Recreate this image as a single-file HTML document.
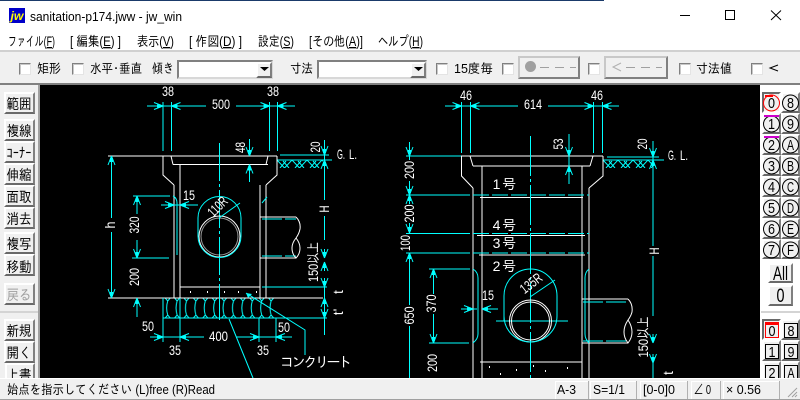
<!DOCTYPE html>
<html lang="ja"><head><meta charset="utf-8"><title>sanitation-p174.jww - jw_win</title>
<style>
html,body{margin:0;padding:0;width:800px;height:400px;overflow:hidden;background:#f0f0f0}
div{position:absolute;box-sizing:border-box}
.b{background:#f0f0f0;border:2px solid;border-color:#fff #808080 #696969 #fff}
.cb{background:#fff;border:1px solid;border-color:#808080 #e4e4e4 #e4e4e4 #808080;width:12px;height:12px;top:63px;box-shadow:inset 1px 1px 0 #c8c8c8}
.sel{background:#fff;border:2px solid;border-color:#808080 #d8d8d8 #d8d8d8 #808080;top:60px;height:19px}
.st{top:381px;height:18px;background:#f0f0f0;border:1px solid;border-color:#fff #b0b0b0 #f0f0f0 #fff}
svg{position:absolute;left:0;top:0}
svg text{font-family:"Liberation Sans","IPAGothic",sans-serif}
.d text{fill:#fff;font-size:14px;text-anchor:middle}
.j{font-family:"IPAGothic","Liberation Sans",sans-serif !important}
.c{stroke:#0ff;fill:none;stroke-width:1.2}
.w{stroke:#fff;fill:none;stroke-width:1.2}
.t{stroke:#0ff;fill:none;stroke-width:1}
.v{stroke:#fff;fill:none;stroke-width:1}
</style></head><body>
<div style="left:0;top:0;width:800px;height:50px;background:#fff"></div>
<div style="left:0;top:0;width:604px;height:1px;background:#1a3a6a"></div>
<div style="left:0;top:50px;width:800px;height:2px;background:#d0d0d0"></div>
<div style="left:0;top:83px;width:800px;height:2px;background:#808080"></div>
<div style="left:38px;top:85px;width:2px;height:293px;background:#a0a0a0"></div>
<div style="left:40px;top:85px;width:720px;height:293px;background:#000"></div>
<div style="left:760px;top:85px;width:40px;height:293px;background:#fff"></div>

<div class="cb" style="left:19px"></div><div class="cb" style="left:72px"></div>
<div class="sel" style="left:177px;width:96px"></div><div class="b" style="left:256px;top:62px;width:16px;height:16px"></div>
<div class="sel" style="left:317px;width:110px"></div><div class="b" style="left:410px;top:62px;width:16px;height:16px"></div>
<div class="cb" style="left:436px"></div><div class="cb" style="left:502px"></div>
<div class="b" style="left:518px;top:56px;width:62px;height:23px;border-color:#c8c8c8 #808080 #808080 #c8c8c8"></div>
<div class="cb" style="left:588px"></div>
<div class="b" style="left:604px;top:56px;width:64px;height:23px;border-color:#c8c8c8 #808080 #808080 #c8c8c8"></div>
<div class="cb" style="left:679px"></div><div class="cb" style="left:751px"></div>

<div class="b" style="left:4px;top:92px;width:31px;height:22px"></div>
<div class="b" style="left:4px;top:119px;width:31px;height:22px"></div>
<div class="b" style="left:4px;top:141px;width:31px;height:22px"></div>
<div class="b" style="left:4px;top:163px;width:31px;height:22px"></div>
<div class="b" style="left:4px;top:185px;width:31px;height:22px"></div>
<div class="b" style="left:4px;top:207px;width:31px;height:22px"></div>
<div class="b" style="left:4px;top:232px;width:31px;height:22px"></div>
<div class="b" style="left:4px;top:254px;width:31px;height:22px"></div>
<div class="b" style="left:4px;top:283px;width:31px;height:22px"></div>
<div style="left:0;top:311px;width:38px;height:2px;background:#d4d4d4"></div>
<div class="b" style="left:4px;top:319px;width:31px;height:22px"></div>
<div class="b" style="left:4px;top:341px;width:31px;height:22px"></div>
<div class="b" style="left:5px;top:363px;width:30px;height:22px"></div>

<div class="b" style="left:762px;top:92px;width:19px;height:21px;border-color:#696969 #fff #fff #696969"></div>
<div class="b" style="left:781px;top:92px;width:19px;height:21px"></div>
<div class="b" style="left:762px;top:113px;width:19px;height:21px"></div><div class="b" style="left:781px;top:113px;width:19px;height:21px"></div>
<div class="b" style="left:762px;top:134px;width:19px;height:21px"></div><div class="b" style="left:781px;top:134px;width:19px;height:21px"></div>
<div class="b" style="left:762px;top:155px;width:19px;height:21px"></div><div class="b" style="left:781px;top:155px;width:19px;height:21px"></div>
<div class="b" style="left:762px;top:176px;width:19px;height:21px"></div><div class="b" style="left:781px;top:176px;width:19px;height:21px"></div>
<div class="b" style="left:762px;top:197px;width:19px;height:21px"></div><div class="b" style="left:781px;top:197px;width:19px;height:21px"></div>
<div class="b" style="left:762px;top:218px;width:19px;height:21px"></div><div class="b" style="left:781px;top:218px;width:19px;height:21px"></div>
<div class="b" style="left:762px;top:239px;width:19px;height:20px"></div><div class="b" style="left:781px;top:239px;width:19px;height:20px"></div>
<div class="b" style="left:768px;top:263px;width:25px;height:20px"></div>
<div class="b" style="left:768px;top:285px;width:25px;height:21px"></div>
<div style="left:761px;top:311px;width:39px;height:2px;background:#d4d4d4"></div>
<div class="b" style="left:762px;top:319px;width:19px;height:21px;border-color:#696969 #fff #fff #696969"></div><div class="b" style="left:781px;top:319px;width:19px;height:21px"></div>
<div class="b" style="left:762px;top:340px;width:19px;height:21px"></div><div class="b" style="left:781px;top:340px;width:19px;height:21px"></div>
<div class="b" style="left:762px;top:361px;width:19px;height:21px"></div><div class="b" style="left:781px;top:361px;width:19px;height:21px"></div>

<div style="left:0;top:378px;width:800px;height:22px;background:#f0f0f0;border-top:1px solid #fff;border-bottom:1px solid #a0a0a0"></div>

<svg width="800" height="400" viewBox="0 0 800 400" style="z-index:1">
<defs>
<g id="ar"><path d="M0 0L-3.5 -9M0 0L3.5 -9M0 0V-9" stroke="#0ff" stroke-width="1" fill="none"/><rect x="-1.5" y="-6" width="3" height="4" fill="#0ff"/></g>
<pattern id="gr" x="163" y="298" width="9.4" height="20" patternUnits="userSpaceOnUse"><path d="M4.7 3Q2.6 10 4.7 17M2.2 0L4.7 3L7.2 0M2.2 20L4.7 17L7.2 20" stroke="#0ff" stroke-width="1" fill="none"/></pattern>
<pattern id="ha" x="277" y="160" width="15" height="8" patternUnits="userSpaceOnUse"><path d="M0 0L7.5 8L15 0M3 8L9 1M6 1L12 8" stroke="#0ff" stroke-width="1" fill="none"/></pattern>
<pattern id="hb" x="603" y="160" width="15" height="8" patternUnits="userSpaceOnUse"><path d="M0 0L7.5 8L15 0M3 8L9 1M6 1L12 8" stroke="#0ff" stroke-width="1" fill="none"/></pattern>
</defs>

<!-- title bar -->
<rect x="9" y="8" width="16" height="15" fill="#0000c8"/>
<text x="10.5" y="20" font-size="12" font-weight="bold" font-style="italic" fill="#ff0" textLength="13" lengthAdjust="spacingAndGlyphs">jw</text>
<text x="30" y="21" font-size="12.5" fill="#000" textLength="152" lengthAdjust="spacingAndGlyphs">sanitation-p174.jww - jw_win</text>
<path d="M680 15.5H690" stroke="#000" fill="none"/>
<rect x="725.5" y="10.5" width="9" height="9" stroke="#000" fill="none"/>
<path d="M771 10.5L781 20M781 10.5L771 20" stroke="#000" fill="none"/>

<!-- menu -->
<g font-size="13.5" fill="#000">
<text x="8" y="46" textLength="47" lengthAdjust="spacingAndGlyphs">ファイル(<tspan text-decoration="underline">F</tspan>)</text>
<text x="70" y="46" textLength="51" lengthAdjust="spacingAndGlyphs">[ 編集(<tspan text-decoration="underline">E</tspan>) ]</text>
<text x="137" y="46" textLength="37" lengthAdjust="spacingAndGlyphs">表示(<tspan text-decoration="underline">V</tspan>)</text>
<text x="189" y="46" textLength="53" lengthAdjust="spacingAndGlyphs">[ 作図(<tspan text-decoration="underline">D</tspan>) ]</text>
<text x="258" y="46" textLength="36" lengthAdjust="spacingAndGlyphs">設定(<tspan text-decoration="underline">S</tspan>)</text>
<text x="309" y="46" textLength="54" lengthAdjust="spacingAndGlyphs">[その他(<tspan text-decoration="underline">A</tspan>)]</text>
<text x="378" y="46" textLength="45" lengthAdjust="spacingAndGlyphs">ヘルプ(<tspan text-decoration="underline">H</tspan>)</text>
</g>

<!-- toolbar -->
<g font-size="13" fill="#000">
<text x="37" y="73" textLength="24" lengthAdjust="spacingAndGlyphs">矩形</text>
<text x="90" y="73" textLength="52" lengthAdjust="spacingAndGlyphs">水平･垂直</text>
<text x="152" y="73" textLength="22" lengthAdjust="spacingAndGlyphs">傾き</text>
<text x="290" y="73" textLength="23" lengthAdjust="spacingAndGlyphs">寸法</text>
<text x="454" y="73" textLength="39" lengthAdjust="spacingAndGlyphs">15度毎</text>
<text x="696" y="73" textLength="36" lengthAdjust="spacingAndGlyphs">寸法値</text>
<path d="M778 65L770 68L778 71" stroke="#000" fill="none"/>
</g>
<path d="M260 67H269L264.5 71Z M414 67H423L418.5 71Z" fill="#000"/>
<circle cx="530.5" cy="66.5" r="5.5" fill="#a0a0a0"/>
<path d="M540 67.5H549M555 67.5H564M570 67.5H576M626 67.5H635M641 67.5H650M656 67.5H662" stroke="#a0a0a0" fill="none"/>
<path d="M621 63L613 67L621 71" stroke="#b0b0b0" fill="none"/>

<!-- left buttons -->
<g font-size="14.5" fill="#000" text-anchor="middle">
<text class="j" x="19" y="109" textLength="25" lengthAdjust="spacingAndGlyphs">範囲</text>
<text class="j" x="19" y="136" textLength="25" lengthAdjust="spacingAndGlyphs">複線</text>
<text class="j" x="19" y="158" textLength="25" lengthAdjust="spacingAndGlyphs">ｺｰﾅｰ</text>
<text class="j" x="19" y="180" textLength="25" lengthAdjust="spacingAndGlyphs">伸縮</text>
<text class="j" x="19" y="202" textLength="25" lengthAdjust="spacingAndGlyphs">面取</text>
<text class="j" x="19" y="224" textLength="25" lengthAdjust="spacingAndGlyphs">消去</text>
<text class="j" x="19" y="249" textLength="25" lengthAdjust="spacingAndGlyphs">複写</text>
<text class="j" x="19" y="272" textLength="25" lengthAdjust="spacingAndGlyphs">移動</text>
<text class="j" x="19" y="300" textLength="25" lengthAdjust="spacingAndGlyphs" fill="#a0a0a0">戻る</text>
<text class="j" x="19" y="336" textLength="25" lengthAdjust="spacingAndGlyphs">新規</text>
<text class="j" x="19" y="358" textLength="25" lengthAdjust="spacingAndGlyphs">開く</text>
<text class="j" x="19" y="380" textLength="25" lengthAdjust="spacingAndGlyphs">上書</text>
</g>

<!-- right layer buttons -->
<g fill="none" stroke="#000">
<circle cx="771.5" cy="103" r="8" stroke="#f00"/><circle cx="790.5" cy="103" r="8"/>
<circle cx="771.5" cy="124" r="8"/><circle cx="790.5" cy="124" r="8"/>
<circle cx="771.5" cy="145" r="8"/><circle cx="790.5" cy="145" r="8"/>
<circle cx="771.5" cy="166" r="8"/><circle cx="790.5" cy="166" r="8"/>
<circle cx="771.5" cy="187" r="8"/><circle cx="790.5" cy="187" r="8"/>
<circle cx="771.5" cy="208" r="8"/><circle cx="790.5" cy="208" r="8"/>
<circle cx="771.5" cy="229" r="8"/><circle cx="790.5" cy="229" r="8"/>
<circle cx="771.5" cy="250" r="8"/><circle cx="790.5" cy="250" r="8"/>
<rect x="765.5" y="323.5" width="13" height="14" stroke="#f00"/>
<rect x="784.5" y="323.5" width="13" height="14"/>
<rect x="765.5" y="344.5" width="13" height="14"/>
<rect x="784.5" y="344.5" width="13" height="14"/>
<rect x="765.5" y="365.5" width="13" height="14"/>
<rect x="784.5" y="365.5" width="13" height="14"/>
</g>
<rect x="765" y="95" width="8" height="2" fill="#f00"/>
<rect x="764" y="115" width="15" height="2" fill="#c0c"/>
<rect x="764" y="136" width="15" height="2" fill="#c0c"/>
<rect x="765" y="322" width="14" height="3" fill="#f00"/>
<g font-size="15" fill="#000" text-anchor="middle">
<text x="771.5" y="108" textLength="7" lengthAdjust="spacingAndGlyphs">0</text><text x="790.5" y="108" textLength="7" lengthAdjust="spacingAndGlyphs">8</text>
<text x="771.5" y="129" textLength="7" lengthAdjust="spacingAndGlyphs">1</text><text x="790.5" y="129" textLength="7" lengthAdjust="spacingAndGlyphs">9</text>
<text x="771.5" y="150" textLength="7" lengthAdjust="spacingAndGlyphs">2</text><text x="790.5" y="150" textLength="7" lengthAdjust="spacingAndGlyphs">A</text>
<text x="771.5" y="171" textLength="7" lengthAdjust="spacingAndGlyphs">3</text><text x="790.5" y="171" textLength="7" lengthAdjust="spacingAndGlyphs">B</text>
<text x="771.5" y="192" textLength="7" lengthAdjust="spacingAndGlyphs">4</text><text x="790.5" y="192" textLength="7" lengthAdjust="spacingAndGlyphs">C</text>
<text x="771.5" y="213" textLength="7" lengthAdjust="spacingAndGlyphs">5</text><text x="790.5" y="213" textLength="7" lengthAdjust="spacingAndGlyphs">D</text>
<text x="771.5" y="234" textLength="7" lengthAdjust="spacingAndGlyphs">6</text><text x="790.5" y="234" textLength="7" lengthAdjust="spacingAndGlyphs">E</text>
<text x="771.5" y="255" textLength="7" lengthAdjust="spacingAndGlyphs">7</text><text x="790.5" y="255" textLength="7" lengthAdjust="spacingAndGlyphs">F</text>
<text x="780.5" y="280" font-size="19" textLength="15" lengthAdjust="spacingAndGlyphs">All</text>
<text x="780.5" y="302" font-size="19" textLength="8" lengthAdjust="spacingAndGlyphs">0</text>
<text x="772" y="336" textLength="7" lengthAdjust="spacingAndGlyphs">0</text><text x="791" y="336" textLength="7" lengthAdjust="spacingAndGlyphs">8</text>
<text x="772" y="357" textLength="7" lengthAdjust="spacingAndGlyphs">1</text><text x="791" y="357" textLength="7" lengthAdjust="spacingAndGlyphs">9</text>
<text x="772" y="378" textLength="7" lengthAdjust="spacingAndGlyphs">2</text><text x="791" y="378" textLength="7" lengthAdjust="spacingAndGlyphs">A</text>
</g>

<!-- drawing -->
<g shape-rendering="crispEdges">
<rect x="163" y="298" width="113" height="20" fill="url(#gr)"/>
<rect x="277" y="160" width="46" height="8" fill="url(#ha)"/>
<path class="w" d="M108 156H277M173 164.5H268M108 298H323M180 287H260M260 217H296M260 258H296M180 164V298M174 185V298M260 185V298M266 185V298"/>
<path class="c" d="M262 287H327M163 318H327M277 160H332M280 155H329M163 298V342M180 298V342M259 318V342M276 318V342"/>
<path class="c" d="M163 102V151M171.5 102V151M269.5 102V151M277.5 102V151M147 106H206M236 106H295"/>
<path class="c" d="M111.5 156V218M111.5 232V298M133 196H170M137 196V214M137 240V258M132 258H169M137 298V317M324.5 140V200M324.5 216V240M324.5 282V335"/>
<path class="c" d="M249.5 139V153M249.5 167V182M161 205H198M150 337H204M236 337H292M177 203V255"/>
<path class="c" d="M219.5 143V320" stroke-dasharray="38 3 3 3"/>
<path class="c" d="M262 219H296M262 256H296" stroke-dasharray="20 3"/>
<rect x="603" y="160" width="50" height="8" fill="url(#hb)"/>
<path class="w" d="M461 156H603M473 166H590M480 197.5H583M477 235.5H585M479 255H585M480 362H582M473 188V378M482 166V378M582 166V378M589 188V378M582 299H628M582 343H628"/>
<path class="c" d="M406 195H470M406 233.5H470M406 253H470M406 156H461M461.5 102V153M470.5 102V153M593.5 102V153M602.5 102V153M445 106H518M548 106H619M409.5 142V160M409.5 181V204M409.5 223V233M409.5 253V305M409.5 326V378"/>
<path class="c" d="M473 195H589M473 233.5H589M473 253H589" stroke-dasharray="16 3"/>
<path class="c" d="M530.5 136V378" stroke-dasharray="40 3 3 3"/>
<path class="c" d="M429 269H470M429 343H469M433.5 269V294M433.5 314V343M461 309H477M483 309H498M569 134V184M607 157H659M603 160H664M653 141V246M653 256V316M653 358V378M496 321H568"/>
<path class="c" d="M583 302H626M583 341H626" stroke-dasharray="20 3"/>
</g>

<!-- curves -->
<path class="v" d="M171 156L173 164.5M163 156V175L174 185M277 156V175L266 185M268 156L266 164.5"/>
<path class="v" d="M296 217Q301 222 300 229Q299 234 296 238Q292 243 292 248Q292 254 296 258Q300 254 300 248Q300 243 296 238"/>
<circle class="v" cx="219.5" cy="236.5" r="20.5"/>
<circle class="v" cx="219.5" cy="236.5" r="18.5" opacity=".6"/>
<path class="t" d="M198 236V218A21.5 21.5 0 0 1 241 218V236A21.5 21.5 0 0 1 198 236Z"/>
<path class="t" d="M219 218L240 203M177 203Q177 198 173 196M262 203L267 197"/>
<path class="t" d="M229 319L253 378M246 293L305 330V355"/>
<path class="v" d="M461.5 156V176L473 188M603 156V176L589 188M470 156L473 166M593 156L590 166M628 299Q633 304 632 312Q631 316 628 320Q624 326 624 332Q624 338 628 343Q632 338 632 332Q632 326 628 320"/>
<circle class="v" cx="530.5" cy="321" r="21"/>
<circle class="v" cx="530.5" cy="321" r="19"/>
<path class="t" d="M504 321V296A26.5 27 0 0 1 557 296V316A26.5 26 0 0 1 504 316Z"/>
<path class="t" d="M530 297L555 280M473 269Q478 272 478 278V334Q478 339 473 343M589 269Q585 272 585 278V334Q585 339 589 343"/>

<!-- arrows -->
<use href="#ar" transform="translate(163,106) rotate(-90)"/>
<use href="#ar" transform="translate(171.5,106) rotate(90)"/>
<use href="#ar" transform="translate(269.5,106) rotate(-90)"/>
<use href="#ar" transform="translate(277.5,106) rotate(90)"/>
<use href="#ar" transform="translate(111.5,156) rotate(180)"/>
<use href="#ar" transform="translate(111.5,298)"/>
<use href="#ar" transform="translate(137,196) rotate(180)"/>
<use href="#ar" transform="translate(137,258)"/>
<use href="#ar" transform="translate(137,298) rotate(180)"/>
<use href="#ar" transform="translate(174,205) rotate(-90)"/>
<use href="#ar" transform="translate(180,205) rotate(90)"/>
<use href="#ar" transform="translate(163,337) rotate(-90)"/>
<use href="#ar" transform="translate(180,337) rotate(90)"/>
<use href="#ar" transform="translate(259,337) rotate(-90)"/>
<use href="#ar" transform="translate(276,337) rotate(90)"/>
<use href="#ar" transform="translate(249.5,156)"/>
<use href="#ar" transform="translate(249.5,164.5) rotate(180)"/>
<use href="#ar" transform="translate(324.5,155)"/>
<use href="#ar" transform="translate(324.5,160) rotate(180)"/>
<use href="#ar" transform="translate(324.5,258)"/>
<use href="#ar" transform="translate(324.5,262) rotate(180)"/>
<use href="#ar" transform="translate(324.5,287)"/>
<use href="#ar" transform="translate(324.5,298) rotate(180)"/>
<use href="#ar" transform="translate(324.5,318)"/>
<use href="#ar" transform="translate(461.5,106) rotate(-90)"/>
<use href="#ar" transform="translate(470.5,106) rotate(90)"/>
<use href="#ar" transform="translate(593.5,106) rotate(-90)"/>
<use href="#ar" transform="translate(602.5,106) rotate(90)"/>
<use href="#ar" transform="translate(409.5,156)"/>
<use href="#ar" transform="translate(409.5,195)"/>
<use href="#ar" transform="translate(409.5,195) rotate(180)"/>
<use href="#ar" transform="translate(409.5,233)"/>
<use href="#ar" transform="translate(409.5,253) rotate(180)"/>
<use href="#ar" transform="translate(433.5,269) rotate(180)"/>
<use href="#ar" transform="translate(433.5,343)"/>
<use href="#ar" transform="translate(473,309) rotate(-90)"/>
<use href="#ar" transform="translate(482,309) rotate(90)"/>
<use href="#ar" transform="translate(569,156)"/>
<use href="#ar" transform="translate(569,166) rotate(180)"/>
<use href="#ar" transform="translate(653,157)"/>
<use href="#ar" transform="translate(653,160) rotate(180)"/>
<use href="#ar" transform="translate(653,343)"/>
<use href="#ar" transform="translate(653,363)"/>

<!-- dots -->
<path d="M190 291h1v2h-1zM207 291h1v2h-1zM224 291h1v2h-1zM238 291h1v2h-1zM256 291h1v2h-1zM489 366h1v2h-1zM500 373h1v2h-1zM516 369h1v2h-1zM533 365h1v2h-1zM545 370h1v2h-1zM567 367h1v2h-1z" fill="#fff"/>
<path d="M246 293L252 294L248 298Z" fill="#0ff"/>

<!-- drawing text -->
<g class="d">
<text x="168" y="96" textLength="12" lengthAdjust="spacingAndGlyphs">38</text>
<text x="273" y="96" textLength="12" lengthAdjust="spacingAndGlyphs">38</text>
<text x="221" y="109" textLength="18" lengthAdjust="spacingAndGlyphs">500</text>
<text x="533" y="109" textLength="18" lengthAdjust="spacingAndGlyphs">614</text>
<text x="466" y="100" textLength="12" lengthAdjust="spacingAndGlyphs">46</text>
<text x="597" y="100" textLength="12" lengthAdjust="spacingAndGlyphs">46</text>
<text x="189" y="200" textLength="12" lengthAdjust="spacingAndGlyphs">15</text>
<text x="488" y="300" textLength="12" lengthAdjust="spacingAndGlyphs">15</text>
<text x="341" y="159" textLength="8" lengthAdjust="spacingAndGlyphs">G.</text>
<text x="353" y="159" textLength="8" lengthAdjust="spacingAndGlyphs">L.</text>
<text x="672" y="160" textLength="8" lengthAdjust="spacingAndGlyphs">G.</text>
<text x="684" y="160" textLength="8" lengthAdjust="spacingAndGlyphs">L.</text>
<text x="148" y="331" textLength="12" lengthAdjust="spacingAndGlyphs">50</text>
<text x="175" y="355" textLength="12" lengthAdjust="spacingAndGlyphs">35</text>
<text x="218.5" y="341" textLength="19" lengthAdjust="spacingAndGlyphs">400</text>
<text x="263" y="355" textLength="12" lengthAdjust="spacingAndGlyphs">35</text>
<text x="284" y="332" textLength="12" lengthAdjust="spacingAndGlyphs">50</text>
<text x="316" y="367" font-size="12" textLength="72" lengthAdjust="spacing">コンクリート</text>
<text x="496.5" y="189" font-size="12">1</text><text x="509" y="189" font-size="12">号</text>
<text x="496.5" y="230" font-size="12">4</text><text x="509" y="230" font-size="12">号</text>
<text x="496.5" y="248" font-size="12">3</text><text x="509" y="248" font-size="12">号</text>
<text x="496.5" y="271" font-size="12">2</text><text x="509" y="271" font-size="12">号</text>
<text transform="translate(245,147.5) rotate(-90)" textLength="11" lengthAdjust="spacingAndGlyphs">48</text>
<text transform="translate(320,147) rotate(-90)" textLength="11" lengthAdjust="spacingAndGlyphs">20</text>
<text transform="translate(563,144) rotate(-90)" textLength="11" lengthAdjust="spacingAndGlyphs">53</text>
<text transform="translate(647,144) rotate(-90)" textLength="11" lengthAdjust="spacingAndGlyphs">20</text>
<text transform="translate(329,209) rotate(-90)" font-size="13" textLength="7" lengthAdjust="spacingAndGlyphs">H</text>
<text transform="translate(659,251) rotate(-90)" font-size="13" textLength="7" lengthAdjust="spacingAndGlyphs">H</text>
<text transform="translate(115,225) rotate(-90)" font-size="13" textLength="7" lengthAdjust="spacingAndGlyphs">h</text>
<text transform="translate(139,225) rotate(-90)" textLength="17" lengthAdjust="spacingAndGlyphs">320</text>
<text transform="translate(139,277) rotate(-90)" textLength="18" lengthAdjust="spacingAndGlyphs">200</text>
<text transform="translate(414,170) rotate(-90)" textLength="18" lengthAdjust="spacingAndGlyphs">200</text>
<text transform="translate(414,213.5) rotate(-90)" textLength="18" lengthAdjust="spacingAndGlyphs">200</text>
<text transform="translate(410,243) rotate(-90)" textLength="16" lengthAdjust="spacingAndGlyphs">100</text>
<text transform="translate(414,315.5) rotate(-90)" textLength="18" lengthAdjust="spacingAndGlyphs">650</text>
<text transform="translate(436,303.5) rotate(-90)" textLength="18" lengthAdjust="spacingAndGlyphs">370</text>
<text transform="translate(437,363) rotate(-90)" textLength="18" lengthAdjust="spacingAndGlyphs">200</text>
<text transform="translate(318,262) rotate(-90)" font-size="12" textLength="40" lengthAdjust="spacingAndGlyphs">150以上</text>
<text transform="translate(648,337) rotate(-90)" font-size="12" textLength="41" lengthAdjust="spacingAndGlyphs">150以上</text>
<text transform="translate(343,292) rotate(-90)" font-size="13">t</text>
<text transform="translate(343,312) rotate(-90)" font-size="13">t'</text>
<text transform="translate(673,373) rotate(-90)" font-size="13">t</text>
<text transform="translate(221,210) rotate(-45)" font-size="12" textLength="22" lengthAdjust="spacingAndGlyphs">110R</text>
<text transform="translate(534,287) rotate(-38)" font-size="12" textLength="24" lengthAdjust="spacingAndGlyphs">135R</text>
</g>

<!-- status bar, above the canvas overflow -->
<rect x="0" y="378" width="800" height="21" fill="#f0f0f0"/>
<rect x="0" y="378" width="800" height="1" fill="#fff"/>
<rect x="0" y="399" width="800" height="1" fill="#a0a0a0"/>
<g fill="#f0f0f0" stroke="#fff" shape-rendering="crispEdges">
<path d="M555.5 399V381.5H589" fill="none"/><path d="M590.5 399V381.5H637" fill="none"/><path d="M640.5 399V381.5H688" fill="none"/><path d="M691.5 399V381.5H721" fill="none"/><path d="M723.5 399V381.5H780" fill="none"/>
</g>
<path d="M588.5 381V399M636.5 381V399M687.5 381V399M720.5 381V399M779.5 381V399" stroke="#b0b0b0" fill="none" shape-rendering="crispEdges"/>
<g font-size="13" fill="#000">
<text x="7" y="394" textLength="208" lengthAdjust="spacingAndGlyphs">始点を指示してください (L)free (R)Read</text>
<text x="557" y="394" textLength="19" lengthAdjust="spacingAndGlyphs">A-3</text>
<text x="593" y="394" textLength="32" lengthAdjust="spacingAndGlyphs">S=1/1</text>
<text x="643" y="394" textLength="32" lengthAdjust="spacingAndGlyphs">[0-0]0</text>
<text x="694" y="394" textLength="17" lengthAdjust="spacingAndGlyphs">∠ 0</text>
<text x="726" y="394" textLength="35" lengthAdjust="spacingAndGlyphs">× 0.56</text>
</g>
<path d="M797 388L788 397M797 392L792 397M797 395L795 397" stroke="#a0a0a0" fill="none"/>
</svg>
</body></html>
